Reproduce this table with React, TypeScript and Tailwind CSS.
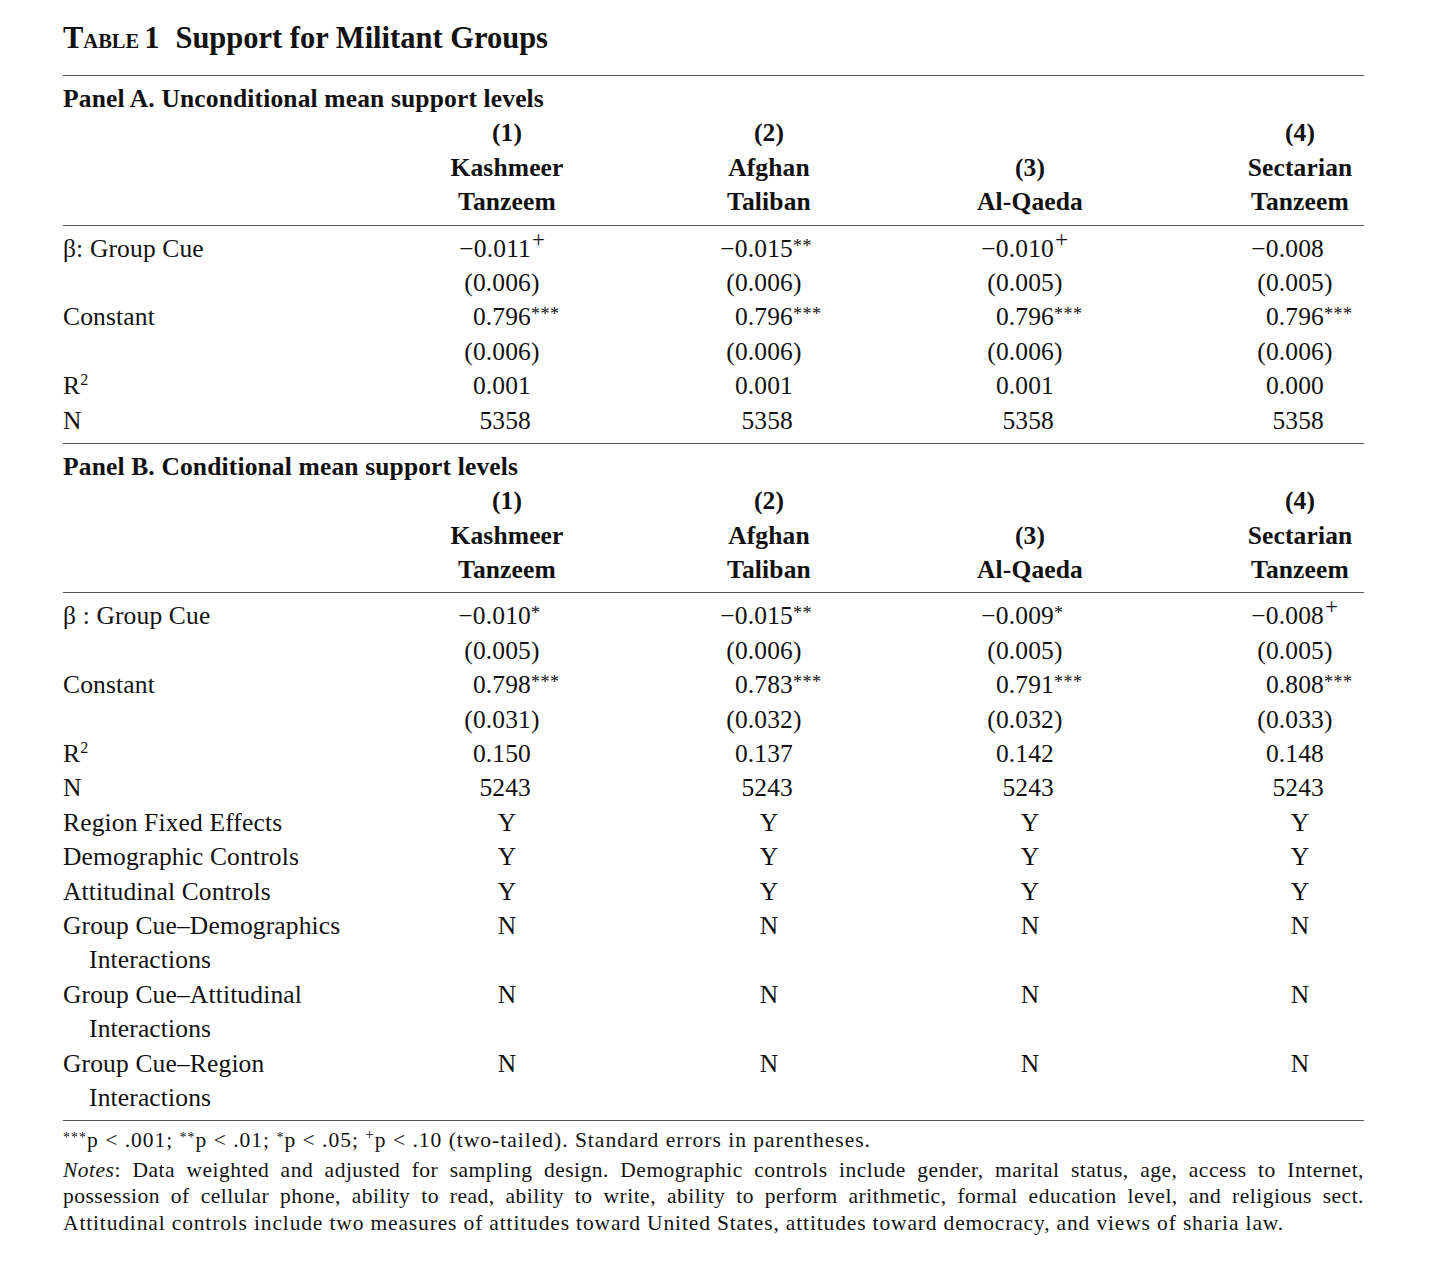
import React from "react";

type V = { num?: string; sup?: string; supKind?: "star" | "plus"; paren?: boolean; center?: string };

const GRID = "grid grid-cols-[313px_262px_262px_260px_204px]";
const PAD = ["", "", "", "pl-[76px]"];
const NUMW = ["w-[155px]", "w-[155px]", "w-[154px]", "w-[88px]"];

function Sup({ s, kind }: { s: string; kind: "star" | "plus" }) {
  if (kind === "plus")
    return <span className="relative -top-[10px] ml-[1px] text-[23px] font-light leading-none">{s}</span>;
  return <span className="relative -top-[5px] text-[18px] leading-none tracking-[0.5px]">{s}</span>;
}

function Cell({ v, i }: { v: V; i: number }) {
  if (v.center !== undefined) {
    return (
      <div className={PAD[i]}>
        <div className="text-center">{v.center}</div>
      </div>
    );
  }
  if (!v.num) return <div />;
  return (
    <div className={`flex items-baseline whitespace-nowrap ${PAD[i]}`}>
      <span className={`${NUMW[i]} shrink-0 text-right`}>
        {v.paren ? "(" : ""}
        {v.num}
      </span>
      {v.paren && <span>)</span>}
      {v.sup && <Sup s={v.sup} kind={v.supKind ?? "star"} />}
    </div>
  );
}

function Row({ label, cells, indent }: { label: React.ReactNode; cells?: V[]; indent?: boolean }) {
  return (
    <div className={`${GRID} h-[34.4px] leading-[34.4px]`}>
      <div className={`whitespace-nowrap ${indent ? "pl-[26px]" : ""}`}>{label}</div>
      {(cells ?? [{}, {}, {}, {}]).map((c, i) => (
        <Cell key={i} v={c} i={i} />
      ))}
    </div>
  );
}

function Rule({ top = "mt-[5px]" }: { top?: string }) {
  return <div className={`${top} mb-[6px] h-px bg-[#555]`} />;
}

function Header({ title }: { title: string }) {
  const cols: string[][] = [
    ["(1)", "Kashmeer", "Tanzeem"],
    ["(2)", "Afghan", "Taliban"],
    ["", "(3)", "Al-Qaeda"],
    ["(4)", "Sectarian", "Tanzeem"],
  ];
  return (
    <div className="font-bold">
      <div className="h-[34.4px] leading-[34.4px] whitespace-nowrap">{title}</div>
      {[0, 1, 2].map((r) => (
        <div key={r} className={`${GRID} h-[34.4px] leading-[34.4px]`}>
          <div />
          {cols.map((c, i) => (
            <div key={i} className={PAD[i]}>
              <div className="text-center">{c[r]}</div>
            </div>
          ))}
        </div>
      ))}
    </div>
  );
}

const n = (num: string, sup?: string, supKind?: "star" | "plus"): V => ({ num, sup, supKind });
const p = (num: string): V => ({ num, paren: true });
const all = (v: V): V[] => [v, v, v, v];

function R2() {
  return (
    <span>
      R<span className="relative -top-[9px] text-[16px] leading-none">2</span>
    </span>
  );
}

export default function App() {
  return (
    <div className="min-h-screen bg-white text-[#111] font-['Liberation_Serif','Times_New_Roman',serif]">
      <div className="ml-[63px] w-[1301px] pt-[18px]">
        <div className="h-[40px] leading-[40px] font-bold whitespace-nowrap">
          <span className="text-[30.5px]">T</span>
          <span className="text-[20.5px]">ABLE</span>
          <span className="ml-[5px] text-[30.5px]">1</span>
          <span className="ml-[16px] text-[30.5px]">Support for Militant Groups</span>
        </div>
        <Rule top="mt-[17px]" />

        <div className="text-[25.5px] tracking-[0.15px]">
          <Header title="Panel A. Unconditional mean support levels" />
          <Rule />
          <Row
            label="β: Group Cue"
            cells={[n("−0.011", "+", "plus"), n("−0.015", "**"), n("−0.010", "+", "plus"), n("−0.008")]}
          />
          <Row label="" cells={[p("0.006"), p("0.006"), p("0.005"), p("0.005")]} />
          <Row label="Constant" cells={all(n("0.796", "***"))} />
          <Row label="" cells={all(p("0.006"))} />
          <Row label={<R2 />} cells={[n("0.001"), n("0.001"), n("0.001"), n("0.000")]} />
          <Row label="N" cells={all(n("5358"))} />
          <Rule />

          <Header title="Panel B. Conditional mean support levels" />
          <Rule />
          <Row
            label="β : Group Cue"
            cells={[n("−0.010", "*"), n("−0.015", "**"), n("−0.009", "*"), n("−0.008", "+", "plus")]}
          />
          <Row label="" cells={[p("0.005"), p("0.006"), p("0.005"), p("0.005")]} />
          <Row
            label="Constant"
            cells={[n("0.798", "***"), n("0.783", "***"), n("0.791", "***"), n("0.808", "***")]}
          />
          <Row label="" cells={[p("0.031"), p("0.032"), p("0.032"), p("0.033")]} />
          <Row label={<R2 />} cells={[n("0.150"), n("0.137"), n("0.142"), n("0.148")]} />
          <Row label="N" cells={all(n("5243"))} />
          <Row label="Region Fixed Effects" cells={all({ center: "Y" })} />
          <Row label="Demographic Controls" cells={all({ center: "Y" })} />
          <Row label="Attitudinal Controls" cells={all({ center: "Y" })} />
          <Row label="Group Cue–Demographics" cells={all({ center: "N" })} />
          <Row label="Interactions" indent />
          <Row label="Group Cue–Attitudinal" cells={all({ center: "N" })} />
          <Row label="Interactions" indent />
          <Row label="Group Cue–Region" cells={all({ center: "N" })} />
          <Row label="Interactions" indent />
          <Rule />
        </div>

        <div className="mt-[5px] text-[21.5px] leading-[26.4px]">
          <div className="whitespace-nowrap tracking-[1px]">
            <span className="relative -top-[5px] text-[14px]">***</span>p &lt; .001;{" "}
            <span className="relative -top-[5px] text-[14px]">**</span>p &lt; .01;{" "}
            <span className="relative -top-[5px] text-[14px]">*</span>p &lt; .05;{" "}
            <span className="relative -top-[8px] text-[15px]">+</span>p &lt; .10 (two-tailed). Standard errors in
            parentheses.
          </div>
          <div className="whitespace-nowrap tracking-[0.5px] text-justify [text-align-last:justify]">
            <i>Notes</i>: Data weighted and adjusted for sampling design. Demographic controls include gender, marital
            status, age, access to Internet,
          </div>
          <div className="whitespace-nowrap tracking-[0.5px] text-justify [text-align-last:justify]">
            possession of cellular phone, ability to read, ability to write, ability to perform arithmetic, formal
            education level, and religious sect.
          </div>
          <div className="whitespace-nowrap tracking-[0.85px]">
            Attitudinal controls include two measures of attitudes toward United States, attitudes toward democracy, and
            views of sharia law.
          </div>
        </div>
      </div>
    </div>
  );
}
